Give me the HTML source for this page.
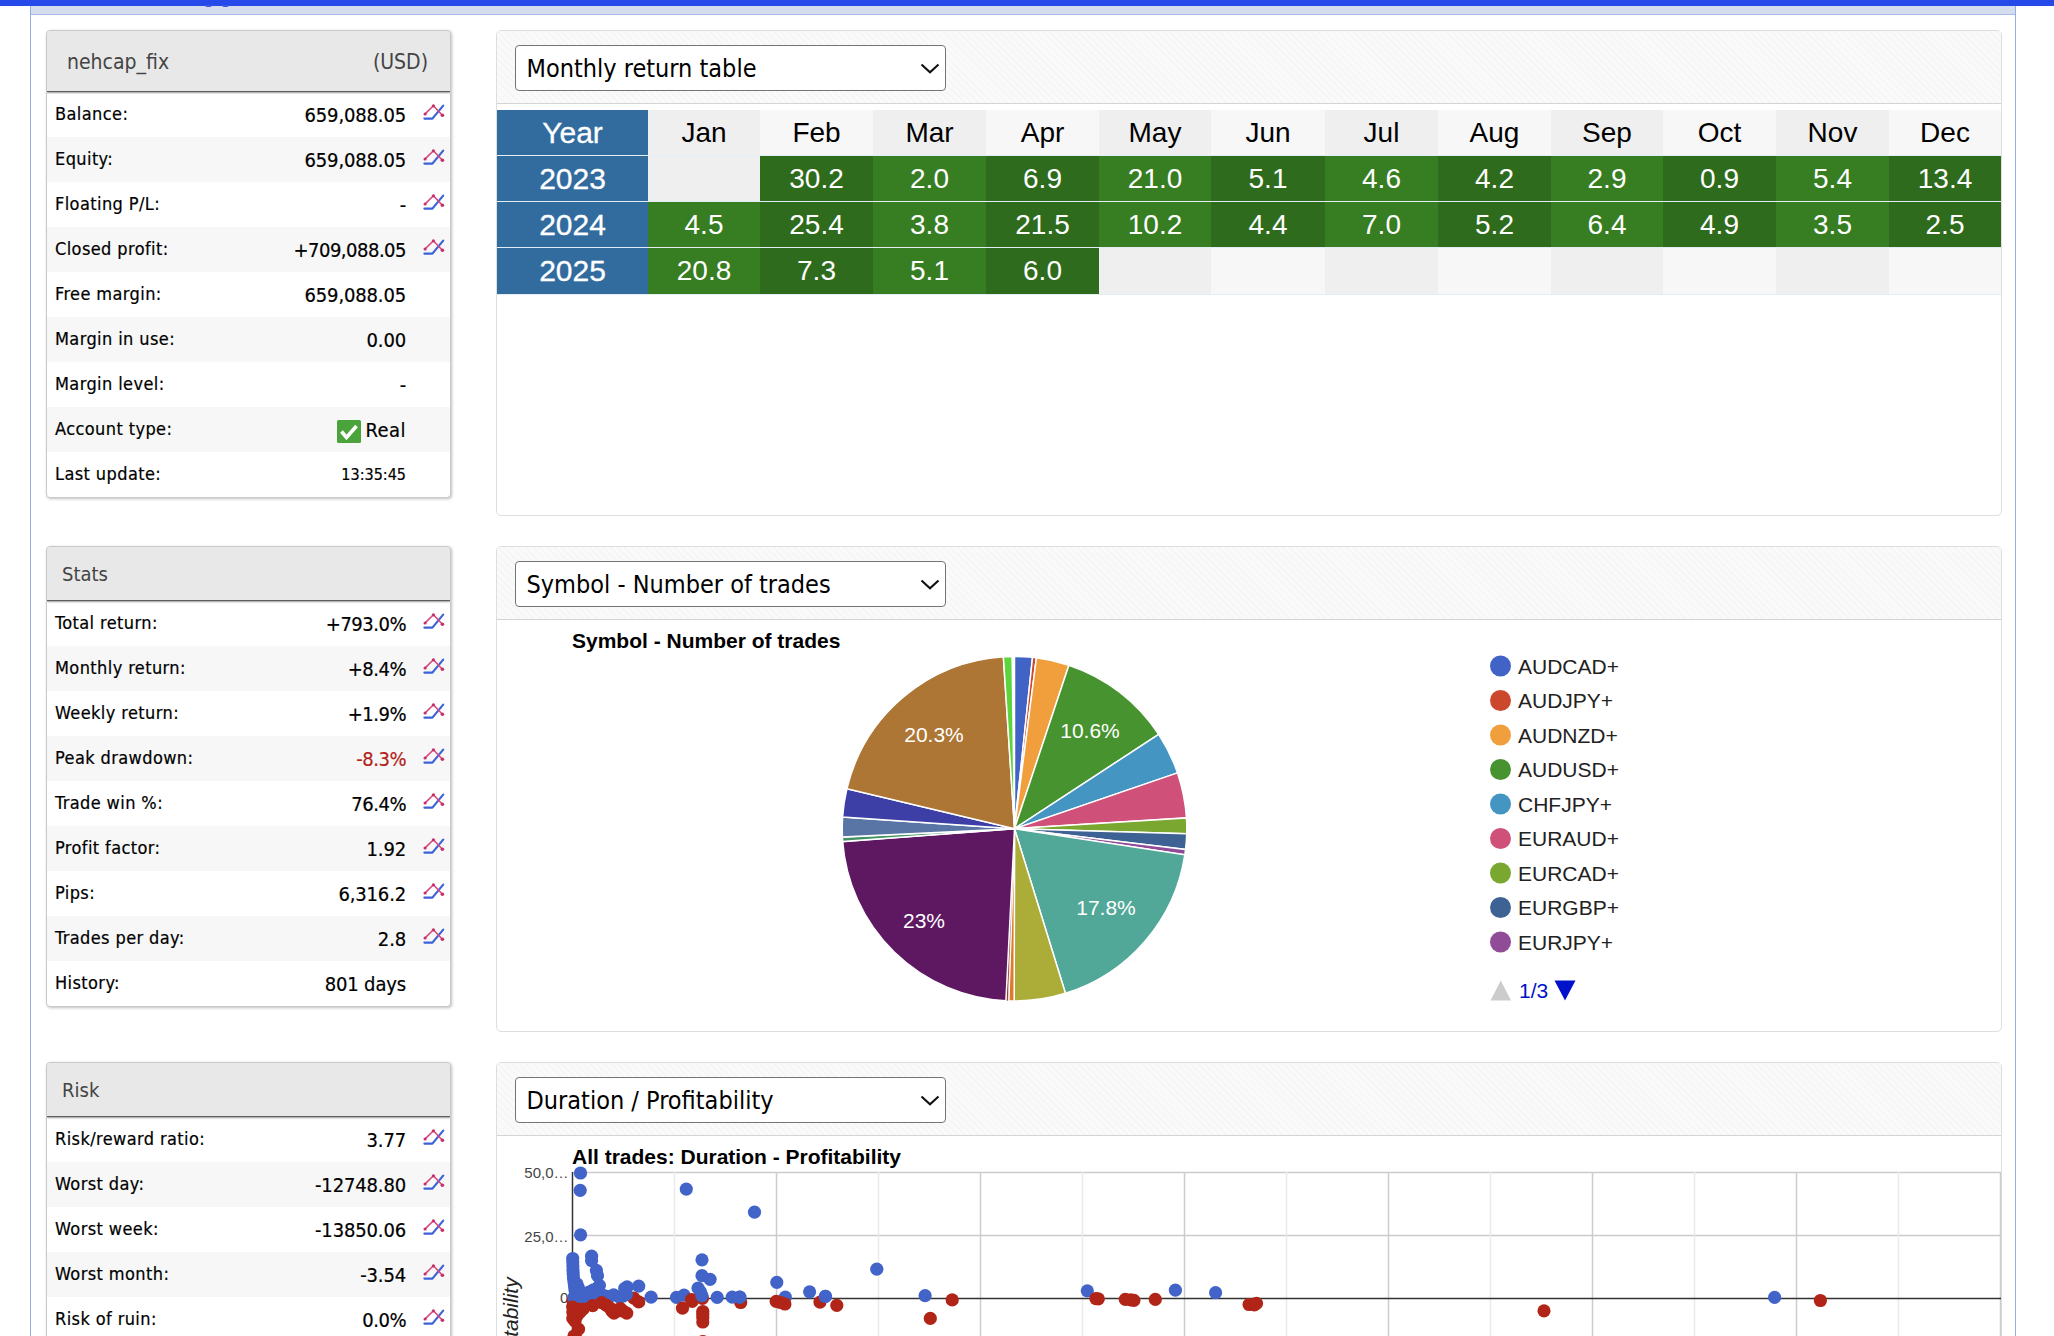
<!DOCTYPE html>
<html><head><meta charset="utf-8"><title>nehcap_fix</title><style>
*{box-sizing:border-box;margin:0;padding:0}
html,body{width:2054px;height:1336px;overflow:hidden;background:#fff}
body{position:relative;font-family:"DejaVu Sans Condensed","DejaVu Sans","Liberation Sans",sans-serif;font-stretch:condensed;color:#000}
.abs{position:absolute}
#topbar{left:0;top:0;width:2054px;height:6px;background:#254ae9}
#strip{left:31px;top:6px;width:1984px;height:9px;background:#d3ddee;border-bottom:1px solid #a7bde8}
#bl{left:30px;top:6px;width:1px;height:1330px;background:#92ade4}
#br{left:2015px;top:6px;width:1px;height:1330px;background:#92ade4}
.lp{position:absolute;left:46px;width:405px;border:1px solid #c9c9c9;border-radius:4px;background:#fff;box-shadow:1px 1px 3px rgba(0,0,0,.25);overflow:hidden}
.lph{background:#e8e8e8;border-bottom:1px solid #5e5e5e;box-shadow:0 1px 1.5px rgba(0,0,0,.4);z-index:2;color:#444;font-size:21px;position:relative}
.row{height:45px;position:relative;font-size:18px;-webkit-text-stroke:.2px currentColor}
.row:nth-child(odd){background:#f7f7f7}
.row .l{position:absolute;left:8px;top:0;line-height:44px;letter-spacing:.4px;white-space:nowrap}
.row .v{position:absolute;right:44px;top:0;line-height:46px;font-size:20px;white-space:nowrap;letter-spacing:-.15px}
.row svg.ic{position:absolute;left:375px;top:10px}
.neg{color:#b3221a}
.row .v.pc{letter-spacing:-.5px}
.rp{position:absolute;left:496px;width:1506px;height:486px;border:1px solid #dedede;border-radius:5px;background:#fff;overflow:hidden}
.rph{position:absolute;left:0;top:0;width:100%;height:73px;border-bottom:1px solid #d4d4d4;background-color:#fafafa;background-image:repeating-linear-gradient(45deg,rgba(0,0,0,0.015) 0,rgba(0,0,0,0.015) 2px,transparent 2px,transparent 5px)}
.sel{position:absolute;left:18px;top:14px;width:431px;height:46px;border:1.5px solid #747474;border-radius:4px;background:#fff;font-size:25px;line-height:46px;padding-left:10.5px;letter-spacing:0;white-space:nowrap}
.sel svg{position:absolute;right:5px;top:17px}
table.mr{position:absolute;left:0;top:79px;border-collapse:separate;border-spacing:0;font-family:"Liberation Sans",sans-serif;font-size:28px;table-layout:fixed;width:1504px}
table.mr td{height:46px;text-align:center;vertical-align:middle;padding:0;border-bottom:1px solid #e4ecf6;line-height:43px}
table.mr tr:last-child td{height:47px;padding-bottom:1px}
table.mr td.y{background:#326c9f;color:#fff;width:151px;font-size:30px;-webkit-text-stroke:.3px #fff}

td.e1{background:#efefef;} td.e2{background:#f7f7f7;}
td.g1{background:#377d22;color:#fff;} td.g2{background:#2e6b1c;color:#fff;}
svg text{font-family:"Liberation Sans",sans-serif}
</style></head><body>
<div id="topbar" class="abs"></div><div id="strip" class="abs"></div><div id="bl" class="abs"></div><div id="br" class="abs"></div>
<div class="abs" style="left:205px;top:5px;width:7px;height:2px;background:#3a5ae4;border-radius:0 0 3px 3px"></div><div class="abs" style="left:222px;top:5px;width:7px;height:2px;background:#3a5ae4;border-radius:0 0 3px 3px"></div>

<div class="lp" style="top:30px"><div class="lph" style="height:61px;line-height:62px"><span style="position:absolute;left:20px">nehcap_fix</span><span style="position:absolute;right:22px">(USD)</span></div><div>
<i style="display:none"></i><div class="row"><span class="l">Balance:</span><span class="v " style="">659,088.05</span><svg class="ic" width="24" height="20" viewBox="0 0 24 20"><path d="M2.4 16.6H10.4L21.2 3.6" fill="none" stroke="#3b63d9" stroke-width="2.2" stroke-linecap="round" stroke-linejoin="round"/><path d="M2.9 12.1L11.4 3.7 20.4 13.2" fill="none" stroke="#d9487f" stroke-width="1.6" stroke-linejoin="round"/><g fill="#c4306c"><circle cx="3.1" cy="12" r="1.6"/><circle cx="11.4" cy="3.8" r="1.6"/><circle cx="20.4" cy="13.2" r="1.8"/></g></svg></div>
<div class="row"><span class="l">Equity:</span><span class="v " style="">659,088.05</span><svg class="ic" width="24" height="20" viewBox="0 0 24 20"><path d="M2.4 16.6H10.4L21.2 3.6" fill="none" stroke="#3b63d9" stroke-width="2.2" stroke-linecap="round" stroke-linejoin="round"/><path d="M2.9 12.1L11.4 3.7 20.4 13.2" fill="none" stroke="#d9487f" stroke-width="1.6" stroke-linejoin="round"/><g fill="#c4306c"><circle cx="3.1" cy="12" r="1.6"/><circle cx="11.4" cy="3.8" r="1.6"/><circle cx="20.4" cy="13.2" r="1.8"/></g></svg></div>
<div class="row"><span class="l">Floating P/L:</span><span class="v " style="">-</span><svg class="ic" width="24" height="20" viewBox="0 0 24 20"><path d="M2.4 16.6H10.4L21.2 3.6" fill="none" stroke="#3b63d9" stroke-width="2.2" stroke-linecap="round" stroke-linejoin="round"/><path d="M2.9 12.1L11.4 3.7 20.4 13.2" fill="none" stroke="#d9487f" stroke-width="1.6" stroke-linejoin="round"/><g fill="#c4306c"><circle cx="3.1" cy="12" r="1.6"/><circle cx="11.4" cy="3.8" r="1.6"/><circle cx="20.4" cy="13.2" r="1.8"/></g></svg></div>
<div class="row"><span class="l">Closed profit:</span><span class="v  pc" style="">+709,088.05</span><svg class="ic" width="24" height="20" viewBox="0 0 24 20"><path d="M2.4 16.6H10.4L21.2 3.6" fill="none" stroke="#3b63d9" stroke-width="2.2" stroke-linecap="round" stroke-linejoin="round"/><path d="M2.9 12.1L11.4 3.7 20.4 13.2" fill="none" stroke="#d9487f" stroke-width="1.6" stroke-linejoin="round"/><g fill="#c4306c"><circle cx="3.1" cy="12" r="1.6"/><circle cx="11.4" cy="3.8" r="1.6"/><circle cx="20.4" cy="13.2" r="1.8"/></g></svg></div>
<div class="row"><span class="l">Free margin:</span><span class="v " style="">659,088.05</span></div>
<div class="row"><span class="l">Margin in use:</span><span class="v " style="">0.00</span></div>
<div class="row"><span class="l">Margin level:</span><span class="v " style="">-</span></div>
<div class="row"><span class="l">Account type:</span><span class="v " style="letter-spacing:.45px"><svg width="24" height="23" viewBox="0 0 24 23" style="vertical-align:-6px;margin-right:4px"><rect width="24" height="23" rx="1.5" fill="#4aa33b"/><path d="M4.5 11.5L9.5 17.5L19.5 6" fill="none" stroke="#fff" stroke-width="3.6" stroke-linecap="butt" stroke-linejoin="miter"/></svg>Real</span></div>
<div class="row"><span class="l">Last update:</span><span class="v " style="font-size:16px;letter-spacing:0">13:35:45</span></div></div></div>
<div class="lp" style="top:546px"><div class="lph" style="height:54px;line-height:55px;font-size:20px"><span style="position:absolute;left:15px">Stats</span></div><div>
<i style="display:none"></i><div class="row"><span class="l">Total return:</span><span class="v  pc" style="">+793.0%</span><svg class="ic" width="24" height="20" viewBox="0 0 24 20"><path d="M2.4 16.6H10.4L21.2 3.6" fill="none" stroke="#3b63d9" stroke-width="2.2" stroke-linecap="round" stroke-linejoin="round"/><path d="M2.9 12.1L11.4 3.7 20.4 13.2" fill="none" stroke="#d9487f" stroke-width="1.6" stroke-linejoin="round"/><g fill="#c4306c"><circle cx="3.1" cy="12" r="1.6"/><circle cx="11.4" cy="3.8" r="1.6"/><circle cx="20.4" cy="13.2" r="1.8"/></g></svg></div>
<div class="row"><span class="l">Monthly return:</span><span class="v  pc" style="">+8.4%</span><svg class="ic" width="24" height="20" viewBox="0 0 24 20"><path d="M2.4 16.6H10.4L21.2 3.6" fill="none" stroke="#3b63d9" stroke-width="2.2" stroke-linecap="round" stroke-linejoin="round"/><path d="M2.9 12.1L11.4 3.7 20.4 13.2" fill="none" stroke="#d9487f" stroke-width="1.6" stroke-linejoin="round"/><g fill="#c4306c"><circle cx="3.1" cy="12" r="1.6"/><circle cx="11.4" cy="3.8" r="1.6"/><circle cx="20.4" cy="13.2" r="1.8"/></g></svg></div>
<div class="row"><span class="l">Weekly return:</span><span class="v  pc" style="">+1.9%</span><svg class="ic" width="24" height="20" viewBox="0 0 24 20"><path d="M2.4 16.6H10.4L21.2 3.6" fill="none" stroke="#3b63d9" stroke-width="2.2" stroke-linecap="round" stroke-linejoin="round"/><path d="M2.9 12.1L11.4 3.7 20.4 13.2" fill="none" stroke="#d9487f" stroke-width="1.6" stroke-linejoin="round"/><g fill="#c4306c"><circle cx="3.1" cy="12" r="1.6"/><circle cx="11.4" cy="3.8" r="1.6"/><circle cx="20.4" cy="13.2" r="1.8"/></g></svg></div>
<div class="row"><span class="l">Peak drawdown:</span><span class="v neg pc" style="">-8.3%</span><svg class="ic" width="24" height="20" viewBox="0 0 24 20"><path d="M2.4 16.6H10.4L21.2 3.6" fill="none" stroke="#3b63d9" stroke-width="2.2" stroke-linecap="round" stroke-linejoin="round"/><path d="M2.9 12.1L11.4 3.7 20.4 13.2" fill="none" stroke="#d9487f" stroke-width="1.6" stroke-linejoin="round"/><g fill="#c4306c"><circle cx="3.1" cy="12" r="1.6"/><circle cx="11.4" cy="3.8" r="1.6"/><circle cx="20.4" cy="13.2" r="1.8"/></g></svg></div>
<div class="row"><span class="l">Trade win %:</span><span class="v  pc" style="">76.4%</span><svg class="ic" width="24" height="20" viewBox="0 0 24 20"><path d="M2.4 16.6H10.4L21.2 3.6" fill="none" stroke="#3b63d9" stroke-width="2.2" stroke-linecap="round" stroke-linejoin="round"/><path d="M2.9 12.1L11.4 3.7 20.4 13.2" fill="none" stroke="#d9487f" stroke-width="1.6" stroke-linejoin="round"/><g fill="#c4306c"><circle cx="3.1" cy="12" r="1.6"/><circle cx="11.4" cy="3.8" r="1.6"/><circle cx="20.4" cy="13.2" r="1.8"/></g></svg></div>
<div class="row"><span class="l">Profit factor:</span><span class="v " style="">1.92</span><svg class="ic" width="24" height="20" viewBox="0 0 24 20"><path d="M2.4 16.6H10.4L21.2 3.6" fill="none" stroke="#3b63d9" stroke-width="2.2" stroke-linecap="round" stroke-linejoin="round"/><path d="M2.9 12.1L11.4 3.7 20.4 13.2" fill="none" stroke="#d9487f" stroke-width="1.6" stroke-linejoin="round"/><g fill="#c4306c"><circle cx="3.1" cy="12" r="1.6"/><circle cx="11.4" cy="3.8" r="1.6"/><circle cx="20.4" cy="13.2" r="1.8"/></g></svg></div>
<div class="row"><span class="l">Pips:</span><span class="v " style="">6,316.2</span><svg class="ic" width="24" height="20" viewBox="0 0 24 20"><path d="M2.4 16.6H10.4L21.2 3.6" fill="none" stroke="#3b63d9" stroke-width="2.2" stroke-linecap="round" stroke-linejoin="round"/><path d="M2.9 12.1L11.4 3.7 20.4 13.2" fill="none" stroke="#d9487f" stroke-width="1.6" stroke-linejoin="round"/><g fill="#c4306c"><circle cx="3.1" cy="12" r="1.6"/><circle cx="11.4" cy="3.8" r="1.6"/><circle cx="20.4" cy="13.2" r="1.8"/></g></svg></div>
<div class="row"><span class="l">Trades per day:</span><span class="v " style="">2.8</span><svg class="ic" width="24" height="20" viewBox="0 0 24 20"><path d="M2.4 16.6H10.4L21.2 3.6" fill="none" stroke="#3b63d9" stroke-width="2.2" stroke-linecap="round" stroke-linejoin="round"/><path d="M2.9 12.1L11.4 3.7 20.4 13.2" fill="none" stroke="#d9487f" stroke-width="1.6" stroke-linejoin="round"/><g fill="#c4306c"><circle cx="3.1" cy="12" r="1.6"/><circle cx="11.4" cy="3.8" r="1.6"/><circle cx="20.4" cy="13.2" r="1.8"/></g></svg></div>
<div class="row"><span class="l">History:</span><span class="v " style="">801 days</span></div></div></div>
<div class="lp" style="top:1062px;height:300px"><div class="lph" style="height:54px;line-height:55px;font-size:20px"><span style="position:absolute;left:15px">Risk</span></div><div>
<i style="display:none"></i><div class="row"><span class="l">Risk/reward ratio:</span><span class="v " style="">3.77</span><svg class="ic" width="24" height="20" viewBox="0 0 24 20"><path d="M2.4 16.6H10.4L21.2 3.6" fill="none" stroke="#3b63d9" stroke-width="2.2" stroke-linecap="round" stroke-linejoin="round"/><path d="M2.9 12.1L11.4 3.7 20.4 13.2" fill="none" stroke="#d9487f" stroke-width="1.6" stroke-linejoin="round"/><g fill="#c4306c"><circle cx="3.1" cy="12" r="1.6"/><circle cx="11.4" cy="3.8" r="1.6"/><circle cx="20.4" cy="13.2" r="1.8"/></g></svg></div>
<div class="row"><span class="l">Worst day:</span><span class="v " style="">-12748.80</span><svg class="ic" width="24" height="20" viewBox="0 0 24 20"><path d="M2.4 16.6H10.4L21.2 3.6" fill="none" stroke="#3b63d9" stroke-width="2.2" stroke-linecap="round" stroke-linejoin="round"/><path d="M2.9 12.1L11.4 3.7 20.4 13.2" fill="none" stroke="#d9487f" stroke-width="1.6" stroke-linejoin="round"/><g fill="#c4306c"><circle cx="3.1" cy="12" r="1.6"/><circle cx="11.4" cy="3.8" r="1.6"/><circle cx="20.4" cy="13.2" r="1.8"/></g></svg></div>
<div class="row"><span class="l">Worst week:</span><span class="v " style="">-13850.06</span><svg class="ic" width="24" height="20" viewBox="0 0 24 20"><path d="M2.4 16.6H10.4L21.2 3.6" fill="none" stroke="#3b63d9" stroke-width="2.2" stroke-linecap="round" stroke-linejoin="round"/><path d="M2.9 12.1L11.4 3.7 20.4 13.2" fill="none" stroke="#d9487f" stroke-width="1.6" stroke-linejoin="round"/><g fill="#c4306c"><circle cx="3.1" cy="12" r="1.6"/><circle cx="11.4" cy="3.8" r="1.6"/><circle cx="20.4" cy="13.2" r="1.8"/></g></svg></div>
<div class="row"><span class="l">Worst month:</span><span class="v " style="">-3.54</span><svg class="ic" width="24" height="20" viewBox="0 0 24 20"><path d="M2.4 16.6H10.4L21.2 3.6" fill="none" stroke="#3b63d9" stroke-width="2.2" stroke-linecap="round" stroke-linejoin="round"/><path d="M2.9 12.1L11.4 3.7 20.4 13.2" fill="none" stroke="#d9487f" stroke-width="1.6" stroke-linejoin="round"/><g fill="#c4306c"><circle cx="3.1" cy="12" r="1.6"/><circle cx="11.4" cy="3.8" r="1.6"/><circle cx="20.4" cy="13.2" r="1.8"/></g></svg></div>
<div class="row"><span class="l">Risk of ruin:</span><span class="v  pc" style="">0.0%</span><svg class="ic" width="24" height="20" viewBox="0 0 24 20"><path d="M2.4 16.6H10.4L21.2 3.6" fill="none" stroke="#3b63d9" stroke-width="2.2" stroke-linecap="round" stroke-linejoin="round"/><path d="M2.9 12.1L11.4 3.7 20.4 13.2" fill="none" stroke="#d9487f" stroke-width="1.6" stroke-linejoin="round"/><g fill="#c4306c"><circle cx="3.1" cy="12" r="1.6"/><circle cx="11.4" cy="3.8" r="1.6"/><circle cx="20.4" cy="13.2" r="1.8"/></g></svg></div></div></div>

<div class="rp" style="top:30px"><div class="rph"><div class="sel">Monthly return table<svg width="20" height="12" viewBox="0 0 20 12"><path d="M1.5 1.5L10 9.3L18.5 1.5" fill="none" stroke="#111" stroke-width="2.1"/></svg></div></div><table class="mr"><colgroup><col style="width:151px"><col style="width:112px"><col style="width:113px"><col style="width:113px"><col style="width:113px"><col style="width:112px"><col style="width:114px"><col style="width:113px"><col style="width:113px"><col style="width:112px"><col style="width:113px"><col style="width:113px"><col style="width:112px"></colgroup><tr class="h"><td class="y">Year</td><td class="e1">Jan</td><td class="e2">Feb</td><td class="e1">Mar</td><td class="e2">Apr</td><td class="e1">May</td><td class="e2">Jun</td><td class="e1">Jul</td><td class="e2">Aug</td><td class="e1">Sep</td><td class="e2">Oct</td><td class="e1">Nov</td><td class="e2">Dec</td></tr><tr><td class="y">2023</td><td class="e1"></td><td class="g2">30.2</td><td class="g1">2.0</td><td class="g2">6.9</td><td class="g1">21.0</td><td class="g2">5.1</td><td class="g1">4.6</td><td class="g2">4.2</td><td class="g1">2.9</td><td class="g2">0.9</td><td class="g1">5.4</td><td class="g2">13.4</td></tr><tr><td class="y">2024</td><td class="g1">4.5</td><td class="g2">25.4</td><td class="g1">3.8</td><td class="g2">21.5</td><td class="g1">10.2</td><td class="g2">4.4</td><td class="g1">7.0</td><td class="g2">5.2</td><td class="g1">6.4</td><td class="g2">4.9</td><td class="g1">3.5</td><td class="g2">2.5</td></tr><tr><td class="y">2025</td><td class="g1">20.8</td><td class="g2">7.3</td><td class="g1">5.1</td><td class="g2">6.0</td><td class="e1"></td><td class="e2"></td><td class="e1"></td><td class="e2"></td><td class="e1"></td><td class="e2"></td><td class="e1"></td><td class="e2"></td></tr></table></div>
<div class="rp" style="top:546px"><div class="rph"><div class="sel">Symbol - Number of trades<svg width="20" height="12" viewBox="0 0 20 12"><path d="M1.5 1.5L10 9.3L18.5 1.5" fill="none" stroke="#111" stroke-width="2.1"/></svg></div></div></div>
<div class="rp" style="top:1062px"><div class="rph"><div class="sel">Duration / Profitability<svg width="20" height="12" viewBox="0 0 20 12"><path d="M1.5 1.5L10 9.3L18.5 1.5" fill="none" stroke="#111" stroke-width="2.1"/></svg></div></div></div>
<svg class="abs" style="left:0;top:0" width="2054" height="1336" viewBox="0 0 2054 1336"><path d="M1014.5,828.7L1014.50,656.40A172.3,172.3 0 0 1 1032.51,657.34Z" fill="#4163c6" stroke="#fff" stroke-width="1.5"/><path d="M1014.5,828.7L1032.51,657.34A172.3,172.3 0 0 1 1036.39,657.80Z" fill="#cc482c" stroke="#fff" stroke-width="1.5"/><path d="M1014.5,828.7L1036.39,657.80A172.3,172.3 0 0 1 1068.89,665.21Z" fill="#f09f3c" stroke="#fff" stroke-width="1.5"/><path d="M1014.5,828.7L1068.89,665.21A172.3,172.3 0 0 1 1158.67,734.35Z" fill="#47932f" stroke="#fff" stroke-width="1.5"/><path d="M1014.5,828.7L1158.67,734.35A172.3,172.3 0 0 1 1177.51,772.89Z" fill="#4495c2" stroke="#fff" stroke-width="1.5"/><path d="M1014.5,828.7L1177.51,772.89A172.3,172.3 0 0 1 1186.46,817.88Z" fill="#cf5079" stroke="#fff" stroke-width="1.5"/><path d="M1014.5,828.7L1186.46,817.88A172.3,172.3 0 0 1 1186.72,833.81Z" fill="#79a730" stroke="#fff" stroke-width="1.5"/><path d="M1014.5,828.7L1186.72,833.81A172.3,172.3 0 0 1 1185.55,849.40Z" fill="#3e6293" stroke="#fff" stroke-width="1.5"/><path d="M1014.5,828.7L1185.55,849.40A172.3,172.3 0 0 1 1184.82,854.76Z" fill="#904c97" stroke="#fff" stroke-width="1.5"/><path d="M1014.5,828.7L1184.82,854.76A172.3,172.3 0 0 1 1065.45,993.29Z" fill="#52a898" stroke="#fff" stroke-width="1.5"/><path d="M1014.5,828.7L1065.45,993.29A172.3,172.3 0 0 1 1014.20,1001.00Z" fill="#acac39" stroke="#fff" stroke-width="1.5"/><path d="M1014.5,828.7L1014.20,1001.00A172.3,172.3 0 0 1 1008.79,1000.91Z" fill="#dc7a2d" stroke="#fff" stroke-width="1.5"/><path d="M1014.5,828.7L1008.79,1000.91A172.3,172.3 0 0 1 1008.04,1000.88Z" fill="#ecd3cd" stroke="#fff" stroke-width="0.5"/><path d="M1014.5,828.7L1008.04,1000.88A172.3,172.3 0 0 1 1005.93,1000.79Z" fill="#8a1f12" stroke="#fff" stroke-width="0.5"/><path d="M1014.5,828.7L1005.93,1000.79A172.3,172.3 0 0 1 842.69,841.62Z" fill="#5e1761" stroke="#fff" stroke-width="1.5"/><path d="M1014.5,828.7L842.69,841.62A172.3,172.3 0 0 1 842.41,837.12Z" fill="#449163" stroke="#fff" stroke-width="1.5"/><path d="M1014.5,828.7L842.41,837.12A172.3,172.3 0 0 1 842.60,816.98Z" fill="#5975a5" stroke="#fff" stroke-width="1.5"/><path d="M1014.5,828.7L842.60,816.98A172.3,172.3 0 0 1 846.89,788.77Z" fill="#3d3ea6" stroke="#fff" stroke-width="1.5"/><path d="M1014.5,828.7L846.89,788.77A172.3,172.3 0 0 1 1003.38,656.76Z" fill="#ad7635" stroke="#fff" stroke-width="1.5"/><path d="M1014.5,828.7L1003.38,656.76A172.3,172.3 0 0 1 1012.09,656.42Z" fill="#5dd43d" stroke="#fff" stroke-width="1.5"/><text x="1090" y="738" text-anchor="middle" font-size="21" fill="#fff">10.6%</text><text x="1106" y="915" text-anchor="middle" font-size="21" fill="#fff">17.8%</text><text x="924" y="928" text-anchor="middle" font-size="21" fill="#fff">23%</text><text x="934" y="742" text-anchor="middle" font-size="21" fill="#fff">20.3%</text><circle cx="1500.5" cy="666.0" r="10.5" fill="#4163c6"/><text x="1518" y="673.5" font-size="21" fill="#222">AUDCAD+</text><circle cx="1500.5" cy="700.5" r="10.5" fill="#cc482c"/><text x="1518" y="708.0" font-size="21" fill="#222">AUDJPY+</text><circle cx="1500.5" cy="735.0" r="10.5" fill="#f09f3c"/><text x="1518" y="742.5" font-size="21" fill="#222">AUDNZD+</text><circle cx="1500.5" cy="769.5" r="10.5" fill="#47932f"/><text x="1518" y="777.0" font-size="21" fill="#222">AUDUSD+</text><circle cx="1500.5" cy="804.0" r="10.5" fill="#4495c2"/><text x="1518" y="811.5" font-size="21" fill="#222">CHFJPY+</text><circle cx="1500.5" cy="838.5" r="10.5" fill="#cf5079"/><text x="1518" y="846.0" font-size="21" fill="#222">EURAUD+</text><circle cx="1500.5" cy="873.0" r="10.5" fill="#79a730"/><text x="1518" y="880.5" font-size="21" fill="#222">EURCAD+</text><circle cx="1500.5" cy="907.5" r="10.5" fill="#3e6293"/><text x="1518" y="915.0" font-size="21" fill="#222">EURGBP+</text><circle cx="1500.5" cy="942.0" r="10.5" fill="#904c97"/><text x="1518" y="949.5" font-size="21" fill="#222">EURJPY+</text><path d="M1490.5 1000.5L1500.8 980.5L1511 1000.5Z" fill="#ccc"/><text x="1519" y="998" font-size="21" fill="#0011cc">1/3</text><path d="M1554.5 980.5L1575.5 980.5L1565 1000.5Z" fill="#0011cc"/><text x="572" y="648" font-size="21" font-weight="bold" fill="#000">Symbol - Number of trades</text><g stroke="#ccc" stroke-width="1.5"><line x1="776.5" y1="1172" x2="776.5" y2="1336"/><line x1="980.5" y1="1172" x2="980.5" y2="1336"/><line x1="1184.5" y1="1172" x2="1184.5" y2="1336"/><line x1="1388.5" y1="1172" x2="1388.5" y2="1336"/><line x1="1592.5" y1="1172" x2="1592.5" y2="1336"/><line x1="1796.5" y1="1172" x2="1796.5" y2="1336"/><line x1="2000.5" y1="1172" x2="2000.5" y2="1336"/><line x1="572" y1="1172.5" x2="2001" y2="1172.5"/><line x1="572" y1="1235.5" x2="2001" y2="1235.5"/></g><g stroke="#ebebeb" stroke-width="1.5"><line x1="674.5" y1="1172" x2="674.5" y2="1336"/><line x1="878.5" y1="1172" x2="878.5" y2="1336"/><line x1="1082.5" y1="1172" x2="1082.5" y2="1336"/><line x1="1286.5" y1="1172" x2="1286.5" y2="1336"/><line x1="1490.5" y1="1172" x2="1490.5" y2="1336"/><line x1="1694.5" y1="1172" x2="1694.5" y2="1336"/><line x1="1898.5" y1="1172" x2="1898.5" y2="1336"/></g><line x1="572" y1="1298.5" x2="2001" y2="1298.5" stroke="#333" stroke-width="1.5"/><line x1="572.5" y1="1172" x2="572.5" y2="1336" stroke="#333" stroke-width="1.5"/><text x="572" y="1164" font-size="21" font-weight="bold" fill="#000">All trades: Duration - Profitability</text><text x="568.5" y="1178" font-size="15" text-anchor="end" fill="#444">50,0…</text><text x="568.5" y="1241.5" font-size="15" text-anchor="end" fill="#444">25,0…</text><text x="568.3" y="1303" font-size="15" text-anchor="end" fill="#444">0</text><text transform="translate(518,1380) rotate(-90)" font-size="21" font-style="italic" fill="#222">Profitability</text><circle cx="633.8" cy="1298.1" r="6.6" fill="#b02518"/><circle cx="638.7" cy="1301.9" r="6.6" fill="#b02518"/><circle cx="573" cy="1301" r="6.6" fill="#b02518"/><circle cx="576" cy="1304" r="6.6" fill="#b02518"/><circle cx="579" cy="1301.5" r="6.6" fill="#b02518"/><circle cx="583" cy="1304" r="6.6" fill="#b02518"/><circle cx="587" cy="1302" r="6.6" fill="#b02518"/><circle cx="702.4" cy="1298.4" r="6.6" fill="#b02518"/><circle cx="740.7" cy="1302.5" r="6.6" fill="#b02518"/><circle cx="820" cy="1302.1" r="6.6" fill="#b02518"/><circle cx="573" cy="1306" r="6.6" fill="#b02518"/><circle cx="577" cy="1309" r="6.6" fill="#b02518"/><circle cx="581" cy="1307" r="6.6" fill="#b02518"/><circle cx="572.7" cy="1258.5" r="6.6" fill="#4264c8"/><circle cx="572.8" cy="1262" r="6.6" fill="#4264c8"/><circle cx="572.9" cy="1266" r="6.6" fill="#4264c8"/><circle cx="573" cy="1270" r="6.6" fill="#4264c8"/><circle cx="573.2" cy="1274" r="6.6" fill="#4264c8"/><circle cx="573.5" cy="1278" r="6.6" fill="#4264c8"/><circle cx="574" cy="1282" r="6.6" fill="#4264c8"/><circle cx="574.5" cy="1286" r="6.6" fill="#4264c8"/><circle cx="575" cy="1290" r="6.6" fill="#4264c8"/><circle cx="575.5" cy="1294" r="6.6" fill="#4264c8"/><circle cx="576" cy="1297" r="6.6" fill="#4264c8"/><circle cx="577" cy="1284" r="6.6" fill="#4264c8"/><circle cx="578.5" cy="1288" r="6.6" fill="#4264c8"/><circle cx="580" cy="1292" r="6.6" fill="#4264c8"/><circle cx="581" cy="1296" r="6.6" fill="#4264c8"/><circle cx="574" cy="1297.5" r="6.6" fill="#4264c8"/><circle cx="578" cy="1298" r="6.6" fill="#4264c8"/><circle cx="583" cy="1297" r="6.6" fill="#4264c8"/><circle cx="580.5" cy="1173" r="6.6" fill="#4264c8"/><circle cx="580.2" cy="1190.3" r="6.6" fill="#4264c8"/><circle cx="686.3" cy="1189.1" r="6.6" fill="#4264c8"/><circle cx="754.5" cy="1212.2" r="6.6" fill="#4264c8"/><circle cx="580.6" cy="1234.8" r="6.6" fill="#4264c8"/><circle cx="591.6" cy="1256.2" r="6.6" fill="#4264c8"/><circle cx="591.6" cy="1260.7" r="6.6" fill="#4264c8"/><circle cx="596.4" cy="1270.4" r="6.6" fill="#4264c8"/><circle cx="597.5" cy="1275.7" r="6.6" fill="#4264c8"/><circle cx="599.4" cy="1285.4" r="6.6" fill="#4264c8"/><circle cx="593.4" cy="1289.9" r="6.6" fill="#4264c8"/><circle cx="589" cy="1292" r="6.6" fill="#4264c8"/><circle cx="585.9" cy="1293.6" r="6.6" fill="#4264c8"/><circle cx="590" cy="1296" r="6.6" fill="#4264c8"/><circle cx="596" cy="1296" r="6.6" fill="#4264c8"/><circle cx="601" cy="1294.5" r="6.6" fill="#4264c8"/><circle cx="604.7" cy="1295.9" r="6.6" fill="#4264c8"/><circle cx="609" cy="1296.5" r="6.6" fill="#4264c8"/><circle cx="613.6" cy="1294.8" r="6.6" fill="#4264c8"/><circle cx="619.6" cy="1297.4" r="6.6" fill="#4264c8"/><circle cx="623" cy="1296" r="6.6" fill="#4264c8"/><circle cx="626.4" cy="1294.4" r="6.6" fill="#4264c8"/><circle cx="627.1" cy="1286.9" r="6.6" fill="#4264c8"/><circle cx="624.7" cy="1288.5" r="6.6" fill="#4264c8"/><circle cx="638.7" cy="1286.1" r="6.6" fill="#4264c8"/><circle cx="651.1" cy="1297.2" r="6.6" fill="#4264c8"/><circle cx="676.5" cy="1297.4" r="6.6" fill="#4264c8"/><circle cx="684" cy="1295.1" r="6.6" fill="#4264c8"/><circle cx="702" cy="1259.8" r="6.6" fill="#4264c8"/><circle cx="702" cy="1275.7" r="6.6" fill="#4264c8"/><circle cx="710.1" cy="1279.3" r="6.6" fill="#4264c8"/><circle cx="698.1" cy="1288.2" r="6.6" fill="#4264c8"/><circle cx="700.5" cy="1292" r="6.6" fill="#4264c8"/><circle cx="701.8" cy="1295.6" r="6.6" fill="#4264c8"/><circle cx="717.2" cy="1297.4" r="6.6" fill="#4264c8"/><circle cx="732.2" cy="1297.2" r="6.6" fill="#4264c8"/><circle cx="739.8" cy="1297.1" r="6.6" fill="#4264c8"/><circle cx="776.8" cy="1282.3" r="6.6" fill="#4264c8"/><circle cx="785.3" cy="1297.1" r="6.6" fill="#4264c8"/><circle cx="809.6" cy="1291.8" r="6.6" fill="#4264c8"/><circle cx="825.4" cy="1296.3" r="6.6" fill="#4264c8"/><circle cx="876.8" cy="1269.2" r="6.6" fill="#4264c8"/><circle cx="925.1" cy="1295.6" r="6.6" fill="#4264c8"/><circle cx="1087.3" cy="1290.8" r="6.6" fill="#4264c8"/><circle cx="1175.4" cy="1290.2" r="6.6" fill="#4264c8"/><circle cx="1215.6" cy="1292.7" r="6.6" fill="#4264c8"/><circle cx="1774.6" cy="1297.4" r="6.6" fill="#4264c8"/><circle cx="601.7" cy="1302.6" r="6.6" fill="#b02518"/><circle cx="592.7" cy="1305.6" r="6.6" fill="#b02518"/><circle cx="606" cy="1305" r="6.6" fill="#b02518"/><circle cx="609.9" cy="1307.9" r="6.6" fill="#b02518"/><circle cx="612" cy="1311" r="6.6" fill="#b02518"/><circle cx="614" cy="1313.1" r="6.6" fill="#b02518"/><circle cx="617" cy="1311" r="6.6" fill="#b02518"/><circle cx="620.3" cy="1308.5" r="6.6" fill="#b02518"/><circle cx="623" cy="1311" r="6.6" fill="#b02518"/><circle cx="626.7" cy="1313.1" r="6.6" fill="#b02518"/><circle cx="579.2" cy="1309.4" r="6.6" fill="#b02518"/><circle cx="577.7" cy="1314.6" r="6.6" fill="#b02518"/><circle cx="572.8" cy="1307.1" r="6.6" fill="#b02518"/><circle cx="572.8" cy="1312" r="6.6" fill="#b02518"/><circle cx="572.8" cy="1318.3" r="6.6" fill="#b02518"/><circle cx="575" cy="1321" r="6.6" fill="#b02518"/><circle cx="576" cy="1317" r="6.6" fill="#b02518"/><circle cx="580" cy="1312" r="6.6" fill="#b02518"/><circle cx="583" cy="1309" r="6.6" fill="#b02518"/><circle cx="578.5" cy="1329.2" r="6.6" fill="#b02518"/><circle cx="574" cy="1336" r="6.6" fill="#b02518"/><circle cx="577" cy="1340" r="6.6" fill="#b02518"/><circle cx="682.5" cy="1308.2" r="6.6" fill="#b02518"/><circle cx="691.5" cy="1299.6" r="6.6" fill="#b02518"/><circle cx="702.8" cy="1311.5" r="6.6" fill="#b02518"/><circle cx="702.8" cy="1314.5" r="6.6" fill="#b02518"/><circle cx="702.8" cy="1317.6" r="6.6" fill="#b02518"/><circle cx="702.8" cy="1322" r="6.6" fill="#b02518"/><circle cx="702.9" cy="1341.5" r="6.6" fill="#b02518"/><circle cx="692.2" cy="1301.3" r="6.6" fill="#b02518"/><circle cx="776.2" cy="1301.3" r="6.6" fill="#b02518"/><circle cx="780.6" cy="1302.5" r="6.6" fill="#b02518"/><circle cx="784.9" cy="1304" r="6.6" fill="#b02518"/><circle cx="836.8" cy="1305.3" r="6.6" fill="#b02518"/><circle cx="930.3" cy="1318.4" r="6.6" fill="#b02518"/><circle cx="952.2" cy="1299.9" r="6.6" fill="#b02518"/><circle cx="1095.9" cy="1298.6" r="6.6" fill="#b02518"/><circle cx="1098.3" cy="1298.8" r="6.6" fill="#b02518"/><circle cx="1125.3" cy="1299.3" r="6.6" fill="#b02518"/><circle cx="1130.7" cy="1299.8" r="6.6" fill="#b02518"/><circle cx="1133.9" cy="1300.4" r="6.6" fill="#b02518"/><circle cx="1155.3" cy="1299.4" r="6.6" fill="#b02518"/><circle cx="1249.1" cy="1304.5" r="6.6" fill="#b02518"/><circle cx="1254.4" cy="1304.8" r="6.6" fill="#b02518"/><circle cx="1256.5" cy="1303.4" r="6.6" fill="#b02518"/><circle cx="1544" cy="1310.8" r="6.6" fill="#b02518"/><circle cx="1820.4" cy="1300.5" r="6.6" fill="#b02518"/><circle cx="825.4" cy="1296.3" r="6.6" fill="#4264c8"/><circle cx="739.8" cy="1297.1" r="6.6" fill="#4264c8"/><circle cx="701.8" cy="1295.6" r="6.6" fill="#4264c8"/></svg>
</body></html>
